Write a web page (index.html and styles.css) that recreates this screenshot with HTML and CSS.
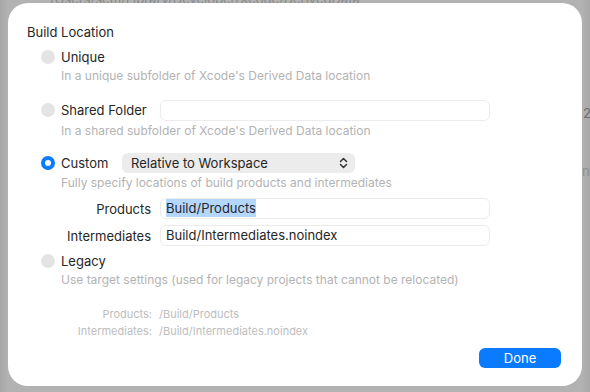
FILE: index.html
```html
<!DOCTYPE html>
<html lang="en">
<head>
  <meta charset="UTF-8" />
  <title>Build Location</title>
  <link rel="stylesheet" href="styles.css">
</head>
<body>
  <!-- cửa sổ phía sau (bị che) -->
  <div class="behind">
    <span class="behind-path">/Users/sem/Library/Developer/Xcode/DerivedData</span>
    <span class="behind-two">2</span>
    <span class="behind-ne">ne</span>
  </div>

  <div class="dialog">
    <div class="title">Build Location</div>

    <div class="options">
      <div class="option">
        <span class="radio"></span>
        <span class="label">Unique</span>
      </div>
      <div class="desc">In a unique subfolder of Xcode's Derived Data location</div>

      <div class="option option-field">
        <span class="radio"></span>
        <span class="label label-wide">Shared Folder</span>
        <div class="field"></div>
      </div>
      <div class="desc">In a shared subfolder of Xcode's Derived Data location</div>

      <div class="option option-popup">
        <span class="radio checked"></span>
        <span class="label label-custom">Custom</span>
        <div class="popup">
          <span>Relative to Workspace</span>
          <svg class="chevrons" width="9" height="12" viewBox="0 0 9 12">
            <path d="M1.5 4.5 L4.5 1.5 L7.5 4.5 M1.5 7.5 L4.5 10.5 L7.5 7.5" fill="none" stroke="#333" stroke-width="1.5" stroke-linecap="round" stroke-linejoin="round"/>
          </svg>
        </div>
      </div>
      <div class="desc">Fully specify locations of build products and intermediates</div>

      <div class="custom-paths">
        <div class="path-label">Products</div>
        <div class="field"><span class="selected">Build/Products</span></div>
        <div class="path-label">Intermediates</div>
        <div class="field">Build/Intermediates.noindex</div>
      </div>

      <div class="option option-legacy">
        <span class="radio"></span>
        <span class="label">Legacy</span>
      </div>
      <div class="desc">Use target settings (used for legacy projects that cannot be relocated)</div>

      <div class="resolved">
        <div class="resolved-label">Products:</div>
        <div>/Build/Products</div>
        <div class="resolved-label">Intermediates:</div>
        <div>/Build/Intermediates.noindex</div>
      </div>
    </div>

    <div class="footer">
      <button class="done">Done</button>
    </div>
  </div>
</body>
</html>
```

FILE: styles.css
```css
/* Nền xám của cửa sổ phía sau */
body {
  margin: 0;
  width: 590px;
  height: 392px;
  overflow: hidden;
  font-family: Inter, "Liberation Sans", Arial, sans-serif;
  color: #262626;
  position: relative;
}
.behind {
  position: absolute;
  inset: 0;
  background: linear-gradient(to right, #a6a6a6 0, #b2b2b2 8px, #b2b2b2 582px, #a8a8a8 590px);
}
.behind-path {
  position: absolute;
  left: 50px;
  top: -9px;
  font-size: 13px;
  color: #8a8a8a;
}
.behind-two {
  position: absolute;
  left: 583px;
  top: 105px;
  font-size: 13px;
  color: #6e6e6e;
}
.behind-ne {
  position: absolute;
  left: 582px;
  top: 163px;
  font-size: 13px;
  color: #8e8e8e;
}
/* Hộp thoại chính */
.dialog {
  position: relative;
  margin: 3px 0 0 8px;
  width: 574px;
  height: 383px;
  box-sizing: border-box;
  background: #fff;
  border-radius: 20px;
  padding: 21px 0 0 19px;
}
.title {
  font-size: 13px;
  line-height: 16px;
}
.options {
  margin: 8px 0 0 14px;
}
.option {
  display: flex;
  align-items: center;
  height: 18px;
  font-size: 13px;
}
.radio {
  width: 14px;
  height: 14px;
  border-radius: 50%;
  background: #e4e4e4;
  margin-right: 6px;
  box-sizing: border-box;
}
.radio.checked {
  background: #fff;
  border: 4.5px solid #0a7aff;
}
.label-wide {
  width: 99px;
}
.label-custom {
  width: 61px;
}
.option-field {
  height: 22px;
  margin-top: 15px;
}
.option-popup {
  height: 20px;
  margin-top: 14px;
}
.option-legacy {
  margin-top: 6px;
}
.desc {
  font-size: 12px;
  line-height: 16px;
  color: #b3b3b3;
  margin: 2px 0 0 20px;
}
/* Ô nhập */
.field {
  width: 330px;
  height: 21px;
  box-sizing: border-box;
  border: 1px solid #ececec;
  border-radius: 6px;
  font-size: 13px;
  line-height: 19px;
  padding-left: 5px;
}
.selected {
  background: #b4d7ff;
  padding: 1px 0 1px;
}
/* Menu chọn */
.popup {
  width: 233px;
  height: 20px;
  box-sizing: border-box;
  background: #ececec;
  border-radius: 6px;
  display: flex;
  align-items: center;
  justify-content: space-between;
  padding: 0 7px 0 9px;
  font-size: 13px;
}
.custom-paths {
  display: grid;
  grid-template-columns: 90px 330px;
  column-gap: 9px;
  row-gap: 6px;
  margin: 7px 0 0 20px;
  align-items: center;
  font-size: 13px;
}
.path-label {
  text-align: right;
}
/* Đường dẫn đã phân giải */
.resolved {
  display: grid;
  grid-template-columns: 91px auto;
  column-gap: 7px;
  margin: 18px 0 0 20px;
  font-size: 11px;
  line-height: 17px;
  color: #bdbdbd;
}
.resolved-label {
  text-align: right;
}
.footer {
  position: absolute;
  right: 21px;
  bottom: 18px;
}
.done {
  width: 82px;
  height: 20px;
  border: none;
  border-radius: 6px;
  background: #0a7aff;
  color: #fff;
  font-family: Inter, "Liberation Sans", Arial, sans-serif;
  font-size: 13px;
  padding: 0;
}
```
